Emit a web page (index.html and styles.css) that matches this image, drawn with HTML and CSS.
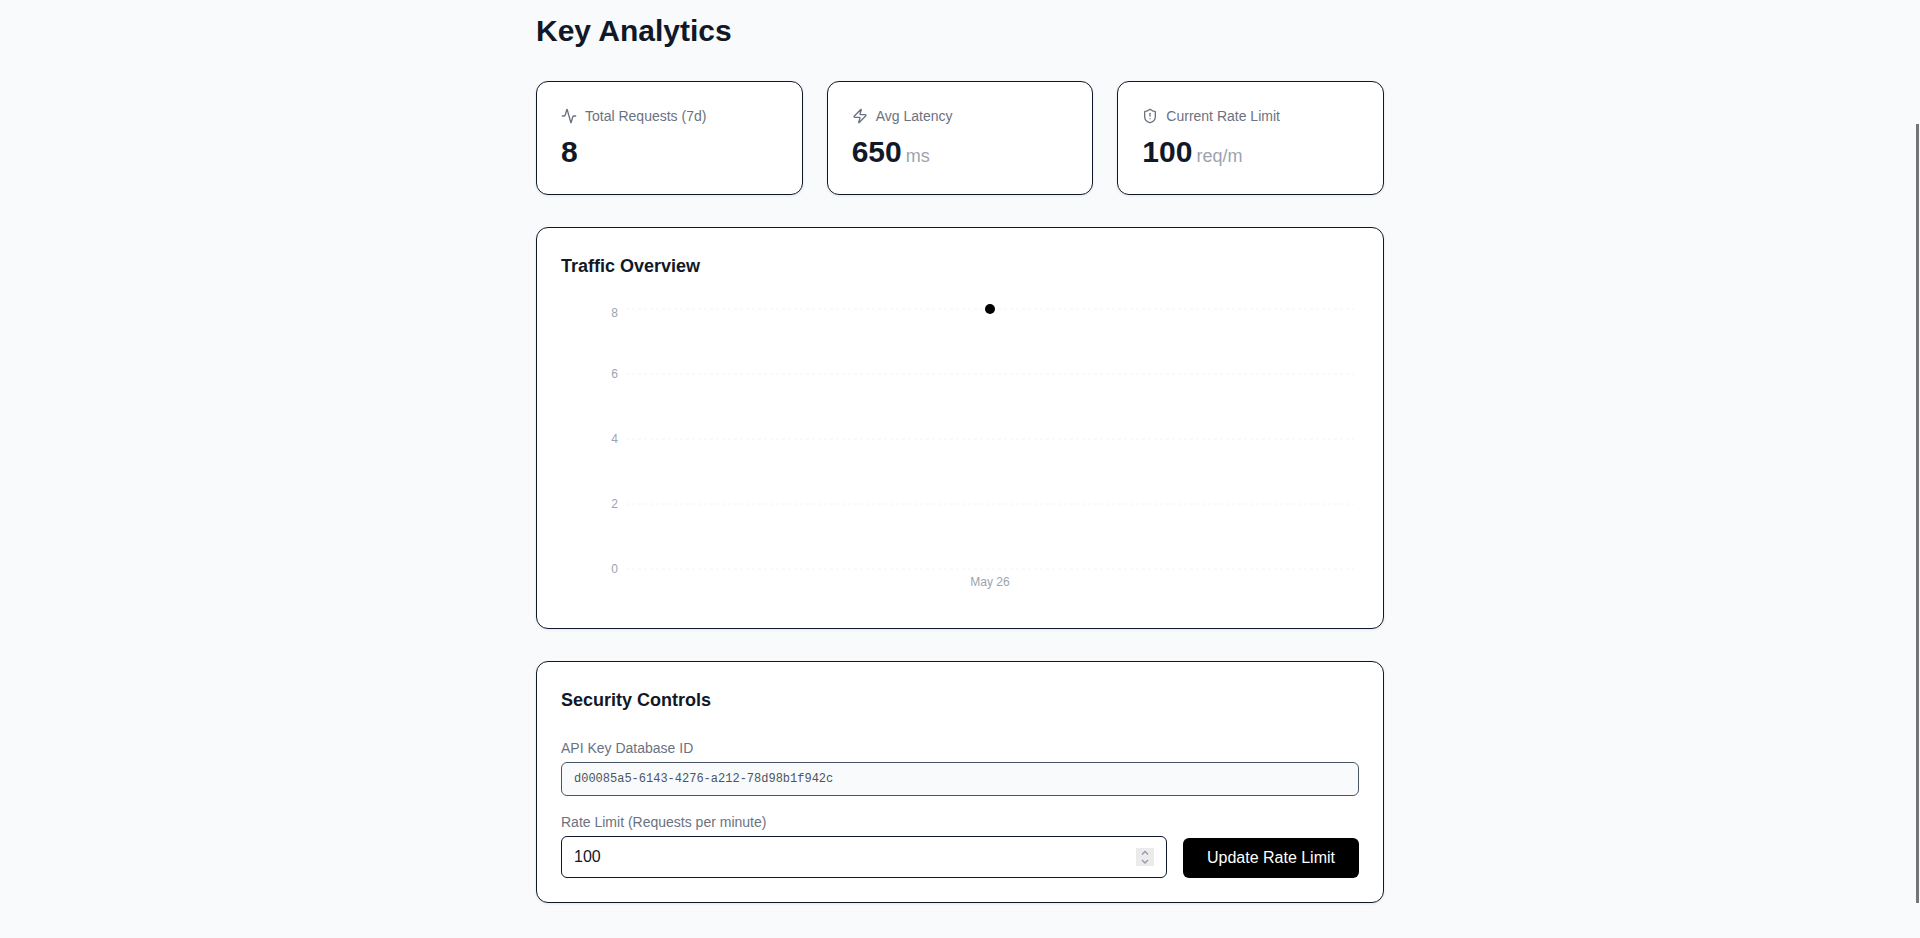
FILE: index.html
```html
<!doctype html>
<html lang="en">

<head>
    <meta charset="utf-8">
    <title>Key Analytics</title>
    <meta name="viewport" content="width=device-width,initial-scale=1">
    <link rel="stylesheet" href="styles.css">
</head>

<body>
    <main class="page">
        <h1 class="page-title">Key Analytics</h1>

        <section class="stats">
            <div class="card">
                <div class="stat-label">
                    <svg class="icon" viewBox="0 0 24 24">
                        <path d="M22 12h-2.48a2 2 0 0 0-1.93 1.46l-2.35 8.36a.25.25 0 0 1-.48 0L9.24 2.18a.25.25 0 0 0-.48 0l-2.35 8.36A2 2 0 0 1 4.49 12H2" />
                    </svg>
                    <span>Total Requests (7d)</span>
                </div>
                <div class="stat-value">8</div>
            </div>
            <div class="card">
                <div class="stat-label">
                    <svg class="icon" viewBox="0 0 24 24">
                        <path d="M4 14a1 1 0 0 1-.78-1.63l9.9-10.2a.5.5 0 0 1 .86.46l-1.92 6.02A1 1 0 0 0 13 10h7a1 1 0 0 1 .78 1.63l-9.9 10.2a.5.5 0 0 1-.86-.46l1.92-6.02A1 1 0 0 0 11 14z" />
                    </svg>
                    <span>Avg Latency</span>
                </div>
                <div class="stat-value">650<span class="unit">ms</span></div>
            </div>
            <div class="card">
                <div class="stat-label">
                    <svg class="icon" viewBox="0 0 24 24">
                        <path d="M20 13c0 5-3.5 7.5-7.66 8.95a1 1 0 0 1-.67-.01C7.5 20.5 4 18 4 13V6a1 1 0 0 1 1-1c2 0 4.5-1.2 6.24-2.72a1.17 1.17 0 0 1 1.52 0C14.51 3.81 17 5 19 5a1 1 0 0 1 1 1z" />
                        <path d="M12 8v4" />
                        <path d="M12 16h.01" />
                    </svg>
                    <span>Current Rate Limit</span>
                </div>
                <div class="stat-value">100<span class="unit">req/m</span></div>
            </div>
        </section>

        <section class="card">
            <h2 class="card-title">Traffic Overview</h2>
            <svg class="chart" viewBox="0 0 798 300" role="img" aria-label="Requests per day">
                <g class="grid">
                    <line x1="65" y1="5" x2="793" y2="5" />
                    <line x1="65" y1="70" x2="793" y2="70" />
                    <line x1="65" y1="135" x2="793" y2="135" />
                    <line x1="65" y1="200" x2="793" y2="200" />
                    <line x1="65" y1="265" x2="793" y2="265" />
                </g>
                <g class="tick tick-y">
                    <text x="57" y="13">8</text>
                    <text x="57" y="74">6</text>
                    <text x="57" y="139">4</text>
                    <text x="57" y="204">2</text>
                    <text x="57" y="269">0</text>
                </g>
                <g class="tick tick-x">
                    <text x="429" y="282">May 26</text>
                </g>
                <circle cx="429" cy="5" r="5" />
            </svg>
        </section>

        <section class="card">
            <h2 class="card-title">Security Controls</h2>
            <form class="controls" onsubmit="return false;">
                <div class="field">
                    <label for="key-id">API Key Database ID</label>
                    <input id="key-id" class="input-id" type="text" value="d00085a5-6143-4276-a212-78d98b1f942c" readonly>
                </div>
                <div class="rate-row">
                    <div class="field">
                        <label for="rate-limit">Rate Limit (Requests per minute)</label>
                        <input id="rate-limit" class="input-rate" type="number" value="100">
                    </div>
                    <button class="btn" type="submit">Update Rate Limit</button>
                </div>
            </form>
        </section>
    </main>
    <div class="scroll-thumb"></div>
</body>

</html>
```
FILE: styles.css
```css
* {
    box-sizing: border-box;
}

body {
    margin: 0;
    background-color: #f9fafb;
    color: #111827;
    font-family: "Liberation Sans", Arial, sans-serif;
    font-size: 16px;
    line-height: 24px;
}

.page {
    display: flex;
    flex-direction: column;
    gap: 32px;
    max-width: 896px;
    margin: 0 auto;
    padding: 13px 24px 24px;
}

.page-title {
    margin: 0;
    font-size: 30px;
    line-height: 36px;
}

.stats {
    display: grid;
    grid-template-columns: repeat(3, 1fr);
    gap: 24px;
}

.card {
    padding: 24px;
    background-color: #fff;
    border: 1px solid #0f172a;
    border-radius: 12px;
    box-shadow: 0 1px 3px rgba(0, 0, 0, 0.08);
}

.card-title {
    margin: 0 0 24px;
    font-size: 18px;
    line-height: 28px;
}

.stat-label {
    display: flex;
    align-items: center;
    gap: 8px;
    margin-bottom: 8px;
    color: #6b7280;
    font-size: 14px;
    line-height: 20px;
}

.icon {
    width: 16px;
    height: 16px;
    fill: none;
    stroke: currentColor;
    stroke-width: 2;
    stroke-linecap: round;
    stroke-linejoin: round;
}

.stat-value {
    font-size: 30px;
    font-weight: bold;
    line-height: 36px;
}

.unit {
    margin-left: 4px;
    color: #9ca3af;
    font-size: 18px;
    font-weight: normal;
    line-height: 24px;
}

.chart {
    display: block;
    width: 100%;
    overflow: visible;
}

.grid line {
    stroke: #f3f4f6;
    stroke-dasharray: 3 3;
}

.tick {
    fill: #9ca3af;
    font-size: 12px;
}

.tick-y {
    text-anchor: end;
}

.tick-x {
    text-anchor: middle;
}

.controls {
    display: flex;
    flex-direction: column;
    gap: 16px;
}

.field {
    display: flex;
    flex: 1;
    flex-direction: column;
    gap: 4px;
}

.field label {
    color: #6b7280;
    font-size: 14px;
    line-height: 20px;
}

.field input {
    width: 100%;
    padding: 8px 12px;
    border: 1px solid #0f172a;
    border-radius: 6px;
    background-color: #fff;
    color: #111827;
    font-family: inherit;
    font-size: 16px;
    line-height: 24px;
}

.field .input-id {
    height: 34px;
    border-color: #4b5563;
    background-color: #f9fafb;
    color: #4b5563;
    font-family: "Liberation Mono", "Courier New", monospace;
    font-size: 12px;
    line-height: 16px;
}

.field .input-rate {
    height: 42px;
}

.input-rate::-webkit-inner-spin-button {
    -webkit-appearance: none;
    width: 18px;
    height: 18px;
    background: #ebebec url("data:image/svg+xml,%3Csvg xmlns='http://www.w3.org/2000/svg' width='18' height='18' fill='none' stroke='%239696a6' stroke-width='1.3'%3E%3Cpath d='M6 6.500l3-3 3 3M6 12l3 3 3-3'/%3E%3C/svg%3E") no-repeat;
    opacity: 1;
}

.rate-row {
    display: flex;
    align-items: flex-end;
    gap: 16px;
}

.btn {
    padding: 8px 24px;
    border: 0;
    border-radius: 6px;
    background-color: #000;
    color: #fff;
    font-family: inherit;
    font-size: 16px;
    line-height: 24px;
    cursor: pointer;
}

.scroll-thumb {
    position: fixed;
    top: 124px;
    right: 1px;
    bottom: 35px;
    width: 3px;
    background-color: #757578;
}
```
